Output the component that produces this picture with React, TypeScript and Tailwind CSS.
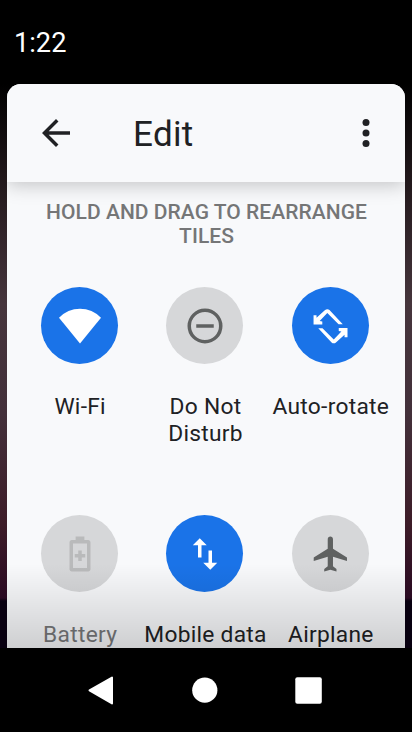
import type { ReactNode } from "react";

const TURN_ARROW =
  "M2.6 5.8H4.3V7.3L9.2 2.9C9.9 2.2 11 2.2 11.7 2.9L19.3 10.95H16.9L10.45 4.6 6.1 9.2 7.6 9.4V11.1H2.6Z";

function Tile({ label, active, dim, children }: { label: string; active?: boolean; dim?: boolean; children: ReactNode }) {
  return (
    <div className="flex h-[228px] flex-col items-center">
      <div
        className={`flex size-[77px] shrink-0 items-center justify-center rounded-full ${
          active ? "bg-[#1a73e8] text-white" : dim ? "bg-[#d6d7d9] text-[#b9babb]" : "bg-[#d6d7d9] text-[#5f6161]"
        }`}
      >
        <svg viewBox="0 0 24 24" className="size-[42px]" fill="currentColor">
          {children}
        </svg>
      </div>
      <div
        className={`mt-[29px] w-[125px] pl-px text-center text-[22.75px] leading-[27px] tracking-[0.012em] whitespace-pre ${
          dim ? "text-[#77787a]" : "text-[#202124]"
        }`}
      >
        {label}
      </div>
    </div>
  );
}

export default function App() {
  return (
    <div className="flex h-[732px] w-[412px] flex-col overflow-hidden bg-black font-[Roboto,sans-serif]">
      <header className="flex h-[84px] shrink-0 items-center pl-[14px] text-[27.2px] leading-[32px] text-white">
        <span className="mt-[2px]">1:22</span>
      </header>

      <div className="h-[564px] shrink-0 bg-[linear-gradient(180deg,#000_0px,#20171a_90px,#46353c_220px,#43303a_330px,#3d1c28_440px,#2a0a22_514px,#080010_517px,#080010_564px)] px-[7px]">
        <main className="relative h-full overflow-hidden rounded-t-[14px] bg-[#f8f9fb]">
          <div className="relative flex h-[98px] items-center bg-[#f8f9fb] shadow-[0_3px_18px_rgba(0,0,0,0.22)]">
            <svg viewBox="0 0 24 24" className="ml-[28px] size-[42px]" fill="#202124">
              <path d="M20 11H7.83l5.59-5.59L12 4l-8 8 8 8 1.41-1.41L7.83 13H20v-2z" />
            </svg>
            <h1 className="ml-[56px] pt-[3px] text-[35px] leading-[41px] tracking-[0.01em] text-[#202124]">Edit</h1>
            <svg viewBox="0 0 24 24" className="mr-[18px] ml-auto size-[42px]" fill="#202124">
              <circle cx="12" cy="6" r="2" />
              <circle cx="12" cy="12" r="2" />
              <circle cx="12" cy="18" r="2" />
            </svg>
          </div>

          <p className="mt-[18px] pl-px text-center text-[21px] leading-[24px] font-medium tracking-[0.04px] text-[#757677]">
            HOLD AND DRAG TO REARRANGE
            <br />
            TILES
          </p>

          <div className="mt-[39px] ml-[10px] grid w-[376px] grid-cols-3">
            <Tile label="Wi-Fi" active>
              <path d="M12 22 24 7.35A16.3 16.3 0 0 0 0 7.35Z" />
            </Tile>
            <Tile label={"Do Not\nDisturb"}>
              <circle cx="12" cy="12" r="9" fill="none" stroke="currentColor" strokeWidth="2" />
              <path d="M7 11h10v2H7z" />
            </Tile>
            <Tile label="Auto-rotate" active>
              <path d={TURN_ARROW} />
              <path transform="rotate(180 12.3 12.15)" d={TURN_ARROW} />
            </Tile>
            <Tile label="Battery" dim>
              <path
                fillRule="evenodd"
                d="M16.7 4H14.5V2h-5v2H7.3C6.6 4 6 4.6 6 5.3v15.4c0 .7.6 1.3 1.3 1.3h9.4c.7 0 1.3-.6 1.3-1.3V5.3C18 4.6 17.4 4 16.7 4zM16 20H8V6h8zM11 16h2v-2h2v-2h-2v-2h-2v2H9v2h2z"
              />
            </Tile>
            <Tile label="Mobile data" active>
              <path d="M9 3 5 6.99h3V14h2V6.99h3L9 3zm7 14.01V10h-2v7.01h-3L15 21l4-3.99h-3z" />
            </Tile>
            <Tile label="Airplane">
              <path d="M21.7 16v-2l-8-5V3.5c0-.83-.67-1.5-1.5-1.5s-1.5.67-1.5 1.5V9l-8 5v2l8-2.5V19l-2 1.5V22l3.5-1 3.5 1v-1.5l-2-1.5v-5.5l8 2.5z" />
            </Tile>
          </div>

          <div className="absolute inset-x-0 bottom-0 h-[84px] bg-[linear-gradient(180deg,rgba(0,0,0,0),rgba(0,0,0,0.17))]" />
        </main>
      </div>

      <nav className="flex h-[84px] shrink-0 items-center bg-black">
        <svg viewBox="0 0 412 84" className="h-[84px] w-[412px]" fill="#fff" stroke="#fff" strokeLinejoin="round">
          <path d="M89.5 42.3 112 29.5V55.5Z" strokeWidth="2" />
          <circle cx="204.8" cy="42.2" r="12.6" stroke="none" />
          <rect x="295.3" y="29.3" width="26.5" height="26.5" rx="2" stroke="none" />
        </svg>
      </nav>
    </div>
  );
}
